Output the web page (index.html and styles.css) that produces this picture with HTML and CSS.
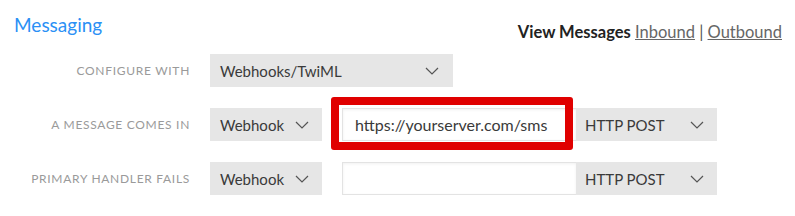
FILE: index.html
```html
<!DOCTYPE html>
<html lang="en">
<head>
    <meta charset="UTF-8">
    <title>Messaging</title>
    <link rel="stylesheet" href="styles.css">
</head>
<body>
    <div class="header">
        <h2 class="title">Messaging</h2>
        <div class="view-links">
            <b>View Messages</b> <a href="#">Inbound</a> | <a href="#">Outbound</a>
        </div>
    </div>

    <div class="form">
        <div class="row">
            <label>Configure with</label>
            <div class="select wide">
                <span>Webhooks/TwiML</span>
                <svg class="chevron" viewBox="0 0 14 8"><path d="M1 1l6 6 6-6"/></svg>
            </div>
        </div>

        <div class="row">
            <label>A message comes in</label>
            <div class="select small">
                <span>Webhook</span>
                <svg class="chevron" viewBox="0 0 14 8"><path d="M1 1l6 6 6-6"/></svg>
            </div>
            <div class="url-group">
                <input class="url" type="text" value="https://yourserver.com/sms">
                <div class="select method">
                    <span>HTTP POST</span>
                    <svg class="chevron" viewBox="0 0 14 8"><path d="M1 1l6 6 6-6"/></svg>
                </div>
                <!-- highlight drawn over the url field -->
                <div class="highlight"></div>
            </div>
        </div>

        <div class="row">
            <label>Primary handler fails</label>
            <div class="select small">
                <span>Webhook</span>
                <svg class="chevron" viewBox="0 0 14 8"><path d="M1 1l6 6 6-6"/></svg>
            </div>
            <div class="url-group">
                <input class="url" type="text" value="">
                <div class="select method">
                    <span>HTTP POST</span>
                    <svg class="chevron" viewBox="0 0 14 8"><path d="M1 1l6 6 6-6"/></svg>
                </div>
            </div>
        </div>
    </div>
</body>
</html>
```

FILE: styles.css
```css
body {
    margin: 0;
    background: #fff;
    font-family: Lato, "Open Sans", sans-serif;
    color: #333;
}
.header {
    display: flex;
    justify-content: space-between;
    align-items: flex-start;
    padding: 0 13px 0 14px;
    height: 54px;
}
.title {
    margin: 13px 0 0 0;
    font-size: 19px;
    font-weight: 400;
    color: #2a90f5;
}
.view-links {
    margin-top: 22px;
    font-size: 16.5px;
    color: #555;
}
.view-links b {
    color: #222;
    font-weight: 700;
}
.view-links a {
    color: #666;
    text-decoration: underline;
}
.form {
    display: flex;
    flex-direction: column;
    gap: 21px;
}
.row {
    display: flex;
    align-items: center;
    height: 33px;
}
.row label {
    width: 190px;
    margin-right: 20px;
    text-align: right;
    text-transform: uppercase;
    font-size: 12px;
    letter-spacing: 0.7px;
    color: #9a9a9a;
}
.select {
    display: flex;
    align-items: center;
    justify-content: space-between;
    box-sizing: border-box;
    height: 33px;
    padding: 0 14px 0 10px;
    background: #e6e6e6;
    font-size: 15px;
    color: #3a3a3a;
}
.select.wide {
    width: 243px;
}
.select.small {
    width: 112px;
    padding-right: 13px;
}
.select.method {
    width: 141px;
    padding: 0 13px 0 9px;
}
.chevron {
    width: 14px;
    height: 8px;
    fill: none;
    stroke: #555;
    stroke-width: 1.2;
}
.url-group {
    display: flex;
    position: relative;
    margin-left: 20px;
}
.url {
    box-sizing: border-box;
    width: 234px;
    height: 33px;
    margin: 0;
    padding: 0 12px;
    border: 1px solid #e3e3e3;
    border-right: none;
    box-shadow: inset 0 1px 3px rgba(0, 0, 0, 0.06);
    font-family: Lato, "Open Sans", sans-serif;
    font-size: 16px;
    color: #3a3a3a;
    outline: none;
}
.highlight {
    position: absolute;
    left: -11px;
    top: -11px;
    width: 242px;
    height: 53px;
    box-sizing: border-box;
    border: 8px solid #e00000;
    border-radius: 3px;
    pointer-events: none;
}
```
